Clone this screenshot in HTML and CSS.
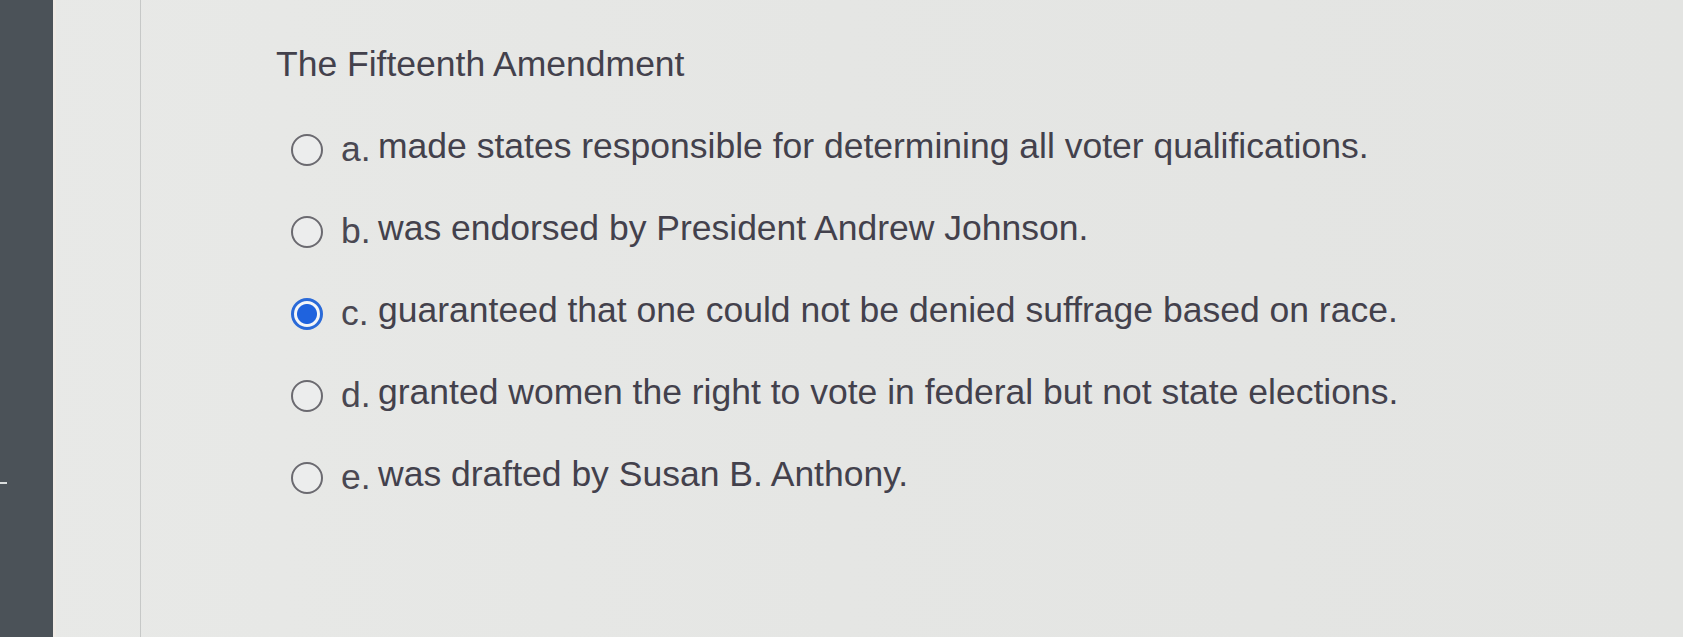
FILE: index.html
```html
<!DOCTYPE html>
<html lang="en">
<head>
<meta charset="utf-8">
<title>The Fifteenth Amendment</title>
<link rel="stylesheet" href="styles.css">
</head>
<body>
<div class="page">
  <aside class="sidebar"><span class="tick"></span></aside>
  <div class="edge"></div>
  <div class="gutter"></div>
  <main class="content">
    <h1 class="question">The Fifteenth Amendment</h1>
    <ul class="options">
      <li class="option"><span class="radio"></span><span class="label">a.</span><span class="text">made states responsible for determining all voter qualifications.</span></li>
      <li class="option"><span class="radio"></span><span class="label">b.</span><span class="text">was endorsed by President Andrew Johnson.</span></li>
      <li class="option"><span class="radio checked"></span><span class="label">c.</span><span class="text">guaranteed that one could not be denied suffrage based on race.</span></li>
      <li class="option"><span class="radio"></span><span class="label">d.</span><span class="text">granted women the right to vote in federal but not state elections.</span></li>
      <li class="option"><span class="radio"></span><span class="label">e.</span><span class="text">was drafted by Susan B. Anthony.</span></li>
    </ul>
  </main>
</div>
</body>
</html>
```

FILE: styles.css
```css
* { box-sizing: border-box; }
html, body { margin: 0; padding: 0; }
body {
  width: 1683px;
  height: 637px;
  overflow: hidden;
  background: #e4e5e3;
  font-family: "Liberation Sans", Arial, Helvetica, sans-serif;
  color: #43414c;
}
.page {
  display: flex;
  height: 637px;
  background: linear-gradient(90deg, #e8e9e7 0%, #e5e6e4 50%, #e3e4e2 100%);
}
.sidebar {
  width: 53px;
  flex: none;
  background: #4b5258;
  display: flex;
  flex-direction: column;
}
.tick {
  display: block;
  margin-top: 482px;
  width: 7px;
  height: 2px;
  background: #d9dcdc;
}
.edge {
  width: 3px;
  flex: none;
  background: #eeeae5;
}
.gutter {
  width: 85px;
  flex: none;
  border-right: 1px solid #c6c8c7;
}
.content {
  flex: 1;
  padding: 44px 0 0 135px;
}
.question {
  margin: 0 0 25px 0;
  font-size: 35.5px;
  line-height: 40px;
  font-weight: normal;
  color: #43414c;
}
.options {
  list-style: none;
  margin: 0;
  padding: 0;
}
.option {
  display: flex;
  align-items: flex-start;
  height: 82px;
  font-size: 35.5px;
  line-height: 40px;
}
.radio {
  flex: none;
  width: 32px;
  height: 32px;
  margin: 25px 18px 0 15px;
  border: 2.5px solid #6b6a70;
  border-radius: 50%;
  background: #eceded;
}
.radio.checked {
  border: 3px solid #2a6ad8;
  background: radial-gradient(circle, #1f63de 0 9.5px, #f4f6f8 10.5px);
}
.label {
  flex: none;
  width: 37px;
  margin-top: 20px;
  color: #4a4852;
}
.text {
  margin-top: 17px;
  white-space: nowrap;
}
```
